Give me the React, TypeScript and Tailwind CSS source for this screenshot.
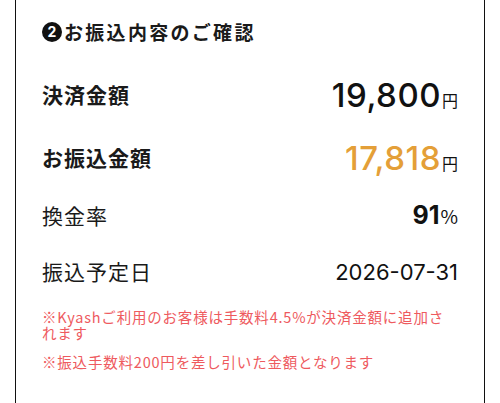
import React from "react";

function Row({ label, bold, children, h, mt }: { label: string; bold?: boolean; children: React.ReactNode; h: string; mt?: string }) {
  return (
    <div className={`flex items-center justify-between ${h} ${mt ?? ""}`}>
      <span className={`text-[21px] tracking-[1px] text-[#1a1a1a] ${bold ? "font-bold" : "font-normal"}`}>
        {label}
      </span>
      <div className="flex items-baseline">{children}</div>
    </div>
  );
}

export default function App() {
  return (
    <div className="w-[500px] h-[403px] bg-white overflow-hidden font-['Noto_Sans_CJK_JP','Noto_Sans',sans-serif]">
      <div className="mx-[15px] h-[403px] border-x-[1.5px] border-[#111] px-[26px]">
        <div className="pt-[20px] flex items-center h-[44px] text-[19px] font-bold tracking-[2.3px] text-[#1a1a1a]">
          <span className="mr-[2px] flex h-[20px] w-[20px] items-center justify-center rounded-full bg-[#111] text-[14px] leading-none text-white tracking-normal font-['Inter',sans-serif] font-bold">
            2
          </span>
          <span className="leading-[24px]">お振込内容のご確認</span>
        </div>
        <Row label="決済金額" bold h="h-[60px]" mt="mt-[21px]">
          <span className="text-[33px] font-medium leading-none text-[#111] tracking-[0.5px] font-['Inter',sans-serif]">19,800</span>
          <span className="text-[16px] text-[#111] ml-[1px]">円</span>
        </Row>
        <Row label="お振込金額" bold h="h-[60px]" mt="mt-[3px]">
          <span className="text-[33px] font-medium leading-none text-[#e49f38] tracking-[0.5px] font-['Inter',sans-serif]">17,818</span>
          <span className="text-[16px] text-[#111] ml-[1px]">円</span>
        </Row>
        <Row label="換金率" h="h-[56px]">
          <span className="text-[25px] font-bold leading-none text-[#111] font-['Inter',sans-serif]">91</span>
          <span className="text-[19px] text-[#111] ml-[1px]">%</span>
        </Row>
        <Row label="振込予定日" h="h-[56px]">
          <span className="text-[22px] font-normal leading-none text-[#111] font-['Inter',sans-serif]">2026-07-31</span>
        </Row>
        <div className="mt-[9px] text-[14.5px] leading-[16px] tracking-[0.8px] text-[#ee5a5e]">
          ※Kyashご利用のお客様は手数料4.5%が決済金額に追加されます
        </div>
        <div className="mt-[13px] text-[14.5px] leading-[16px] tracking-[0.8px] text-[#ee5a5e]">
          ※振込手数料200円を差し引いた金額となります
        </div>
      </div>
    </div>
  );
}
